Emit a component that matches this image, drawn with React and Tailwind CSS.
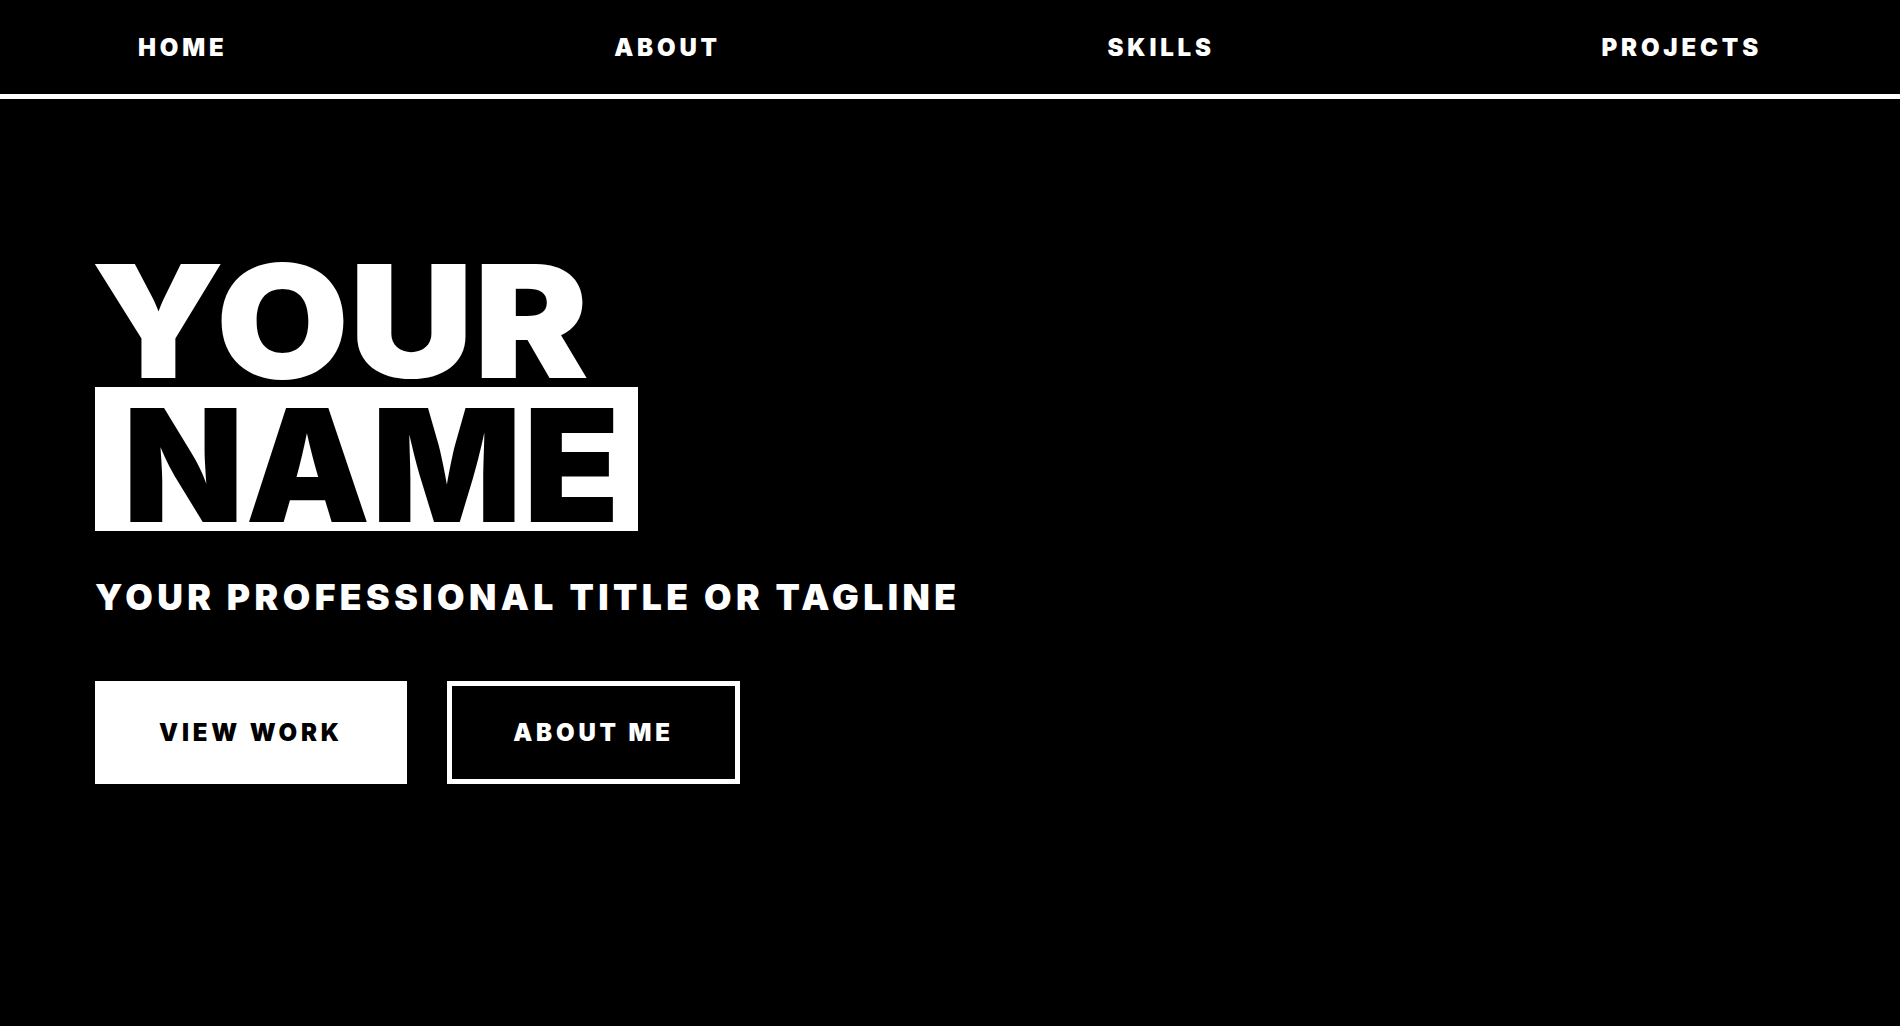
const links = ["HOME", "ABOUT", "SKILLS", "PROJECTS"];

export default function App() {
  return (
    <div className="min-h-screen bg-black text-white font-['Inter','Liberation_Sans',Arial,sans-serif] font-black">
      <nav className="flex h-[99px] items-center justify-between border-b-[5px] border-white px-[138px]">
        {links.map((l) => (
          <a key={l} href="#" className="text-[24px] leading-[29px] tracking-[0.16em]">
            {l}
          </a>
        ))}
      </nav>

      <section className="px-[5vw] pt-[144px]">
        <h1 className="flex flex-col items-start text-[157px]">
          <span className="-ml-[4px] h-[144px] origin-left scale-x-[1.097] pt-[12px] leading-[132px]">YOUR</span>
          <span className="h-[144px] bg-white pl-[28px] pr-[17px] pt-[12px] leading-[132px] tracking-[0.01em] text-black">
            NAME
          </span>
        </h1>
        <p className="mt-[47px] text-[35.5px] leading-[40px] tracking-[0.125em]">
          YOUR PROFESSIONAL TITLE OR TAGLINE
        </p>
        <div className="mt-[63px] flex gap-10">
          <a href="#" className="flex h-[103px] w-[312px] items-center justify-center border-[5px] border-white bg-white text-[24px] leading-[29px] tracking-[0.16em] text-black">
            VIEW WORK
          </a>
          <a href="#" className="flex h-[103px] w-[293px] items-center justify-center border-[5px] border-white text-[24px] leading-[29px] tracking-[0.16em]">
            ABOUT ME
          </a>
        </div>
      </section>
    </div>
  );
}
